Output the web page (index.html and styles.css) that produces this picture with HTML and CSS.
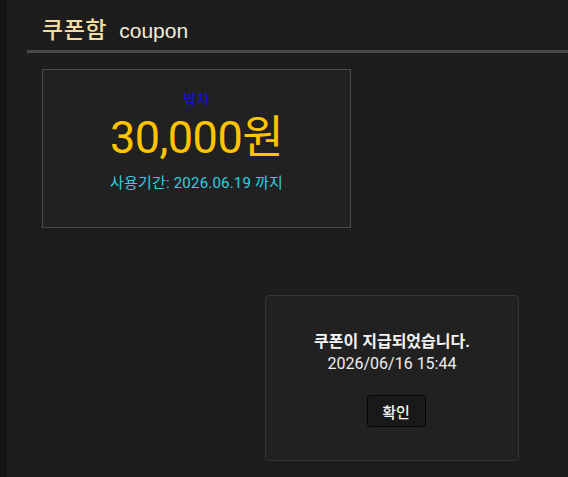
FILE: index.html
```html
<!DOCTYPE html>
<html lang="ko">
<head>
    <meta charset="UTF-8">
    <meta name="viewport" content="width=device-width, initial-scale=1.0">
    <title>쿠폰함</title>
    <link rel="stylesheet" href="styles.css">
</head>
<body>
    <div class="side"></div>

    <!-- 쿠폰함 -->
    <div class="main">
        <div class="title">
            <h1>쿠폰함 <span>coupon</span></h1>
        </div>

        <div class="coupon">
            <p class="shop">밥차</p>
            <p class="price">30,000원</p>
            <p class="period">사용기간: 2026.06.19 까지</p>
        </div>

        <!-- 알림 -->
        <div class="dialog">
            <p class="msg">쿠폰이 지급되었습니다.</p>
            <p class="date">2026/06/16 15:44</p>
            <button class="ok">확인</button>
        </div>
    </div>
</body>
</html>
```

FILE: styles.css
```css
* { margin: 0; padding: 0; box-sizing: border-box; font-family: Roboto, "Noto Sans CJK KR", sans-serif; }
body { background: #1e1d1e; color: white; height: 100vh; display: flex; overflow: hidden; }
.side { width: 7px; background: #151415; flex-shrink: 0; }
.main { flex: 1; padding-left: 20px; }
.title { height: 53px; border-bottom: 3px solid #4a4a4a; padding: 16px 0 0 15px; }
h1 { font-size: 23px; font-weight: 500; color: #f3dca0; line-height: 30px; letter-spacing: 0.5px; }
h1 span { font-family: "Liberation Sans", Arial, sans-serif; font-size: 21px; font-weight: 400; color: #f2edd6; letter-spacing: 0; margin-left: 6px; }
.coupon { margin: 16px 0 0 15px; width: 309px; height: 159px; border: 1px solid #4c4c4c; background: #222122; text-align: center; padding-top: 20px; }
.shop { color: #1010e0; font-size: 14px; line-height: 18px; }
.price { color: #ffc400; font-size: 45px; line-height: 56px; letter-spacing: -0.5px; margin-top: 2px; }
.period { color: #2fcfe0; font-size: 15px; line-height: 22px; margin-top: 6px; letter-spacing: 0.2px; }
.dialog { margin: 67px 0 0 238px; width: 254px; height: 166px; border: 1px solid #363636; border-radius: 4px; background: #222122; text-align: center; padding-top: 35px; }
.msg { font-size: 16px; font-weight: bold; line-height: 22px; color: #f4f4f4; }
.date { font-size: 16px; line-height: 22px; color: #eeeeee; }
.ok { margin: 20px 0 0 8px; width: 59px; height: 32px; background: #1a191a; border: 1px solid #050505; border-radius: 3px; color: #f4f4f4; font-size: 15px; font-weight: 500; cursor: pointer; }
```
